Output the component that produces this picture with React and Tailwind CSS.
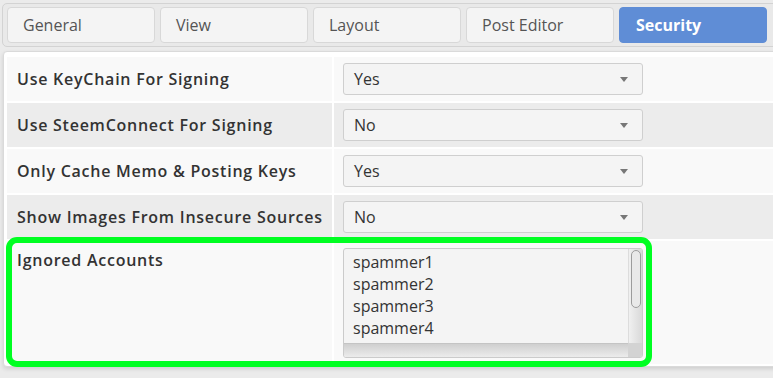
import React from "react";

const tabs = ["General", "View", "Layout", "Post Editor", "Security"];

const settings = [
  { label: "Use KeyChain For Signing", value: "Yes" },
  { label: "Use SteemConnect For Signing", value: "No" },
  { label: "Only Cache Memo & Posting Keys", value: "Yes" },
  { label: "Show Images From Insecure Sources", value: "No" },
];

const ignored = ["spammer1", "spammer2", "spammer3", "spammer4"];

function Select({ value }) {
  return (
    <div className="ml-[9px] w-[300px] h-[32px] border border-[#cfcfcf] rounded-[3px] bg-[#f4f4f4] flex items-center justify-between pl-[10px] pr-[14px] text-[16px] text-[#333]">
      <span>{value}</span>
      <svg width="8" height="5" viewBox="0 0 8 5">
        <path d="M0 0 H8 L4 5 Z" fill="#777" />
      </svg>
    </div>
  );
}

function App() {
  return (
    <div className="w-[773px] h-[378px] overflow-hidden bg-[#ebebeb] relative font-['Open_Sans',sans-serif]">
      <div className="w-[800px]">

        {/* TABS */}
        <div className="ml-[2px] mt-[3px] border border-[#d3d3d3] rounded-[5px] bg-[#e9e9e9] px-[4px] py-[3px] flex gap-[5px]">
          {tabs.map((t) => (
            <div
              key={t}
              className={
                t === "Security"
                  ? "w-[148px] h-[36px] rounded-[4px] border border-[#5f8dd6] bg-[#5f8dd6] pl-[16px] flex items-center text-[16px] font-bold text-white"
                  : "w-[148px] h-[36px] rounded-[4px] border border-[#d8d8d8] bg-[#f4f4f4] pl-[15px] flex items-center text-[16px] text-[#555]"
              }
            >
              {t}
            </div>
          ))}
        </div>

        {/* PANEL */}
        <div className="ml-[3px] mt-[4px] border border-[#dadada] rounded-[4px] bg-white pt-[5px] pl-[3px] pb-[2px] shadow-[0_2px_4px_rgba(0,0,0,0.12)] grid grid-cols-[325px_1fr] gap-[2px]">
          {settings.map((s, i) => (
            <React.Fragment key={s.label}>
              <div className={`h-[44px] flex items-center pl-[10px] text-[16px] font-semibold tracking-[0.75px] text-[#333] ${i % 2 ? "bg-[#ececec]" : "bg-[#f9f9f9]"}`}>
                {s.label}
              </div>
              <div className={`h-[44px] flex items-center ${i % 2 ? "bg-[#ececec]" : "bg-[#f9f9f9]"}`}>
                <Select value={s.value} />
              </div>
            </React.Fragment>
          ))}

          <div className="h-[123px] bg-[#f9f9f9] pl-[10px] pt-[7px] text-[16px] font-semibold tracking-[0.75px] text-[#333] leading-[24px]">
            Ignored Accounts
          </div>
          <div className="h-[123px] bg-[#f9f9f9] pt-[7px]">
            <div className="ml-[9px] w-[300px] h-[110px] border border-[#cbcbcb] rounded-[3px] bg-[#f4f4f4] flex flex-col overflow-hidden">
              <div className="flex flex-1">
                <div className="flex-1 pl-[9px] pt-[2px] text-[16px] leading-[22px] text-[#333]">
                  {ignored.map((a) => (
                    <div key={a}>{a}</div>
                  ))}
                </div>
                <div className="w-[14px] bg-gradient-to-r from-[#f0f0f0] to-[#d9d9d9] border-l border-[#dcdcdc] pt-[1px] flex justify-center">
                  <div className="w-[10px] h-[58px] rounded-full border border-[#9c9c9c] bg-[#e9e9e9]"></div>
                </div>
              </div>
              <div className="flex h-[14px]">
                <div className="flex-1 bg-gradient-to-b from-[#cfcfcf] to-[#ececec] border-t border-[#c4c4c4]"></div>
                <div className="w-[14px] bg-[#d3d3d3]"></div>
              </div>
            </div>
          </div>
        </div>
      </div>

      {/* HIGHLIGHT */}
      <div className="absolute left-[6px] top-[237px] w-[646px] h-[130px] border-[6px] border-[#00ff22] rounded-[11px]"></div>
    </div>
  );
}

export default App;
